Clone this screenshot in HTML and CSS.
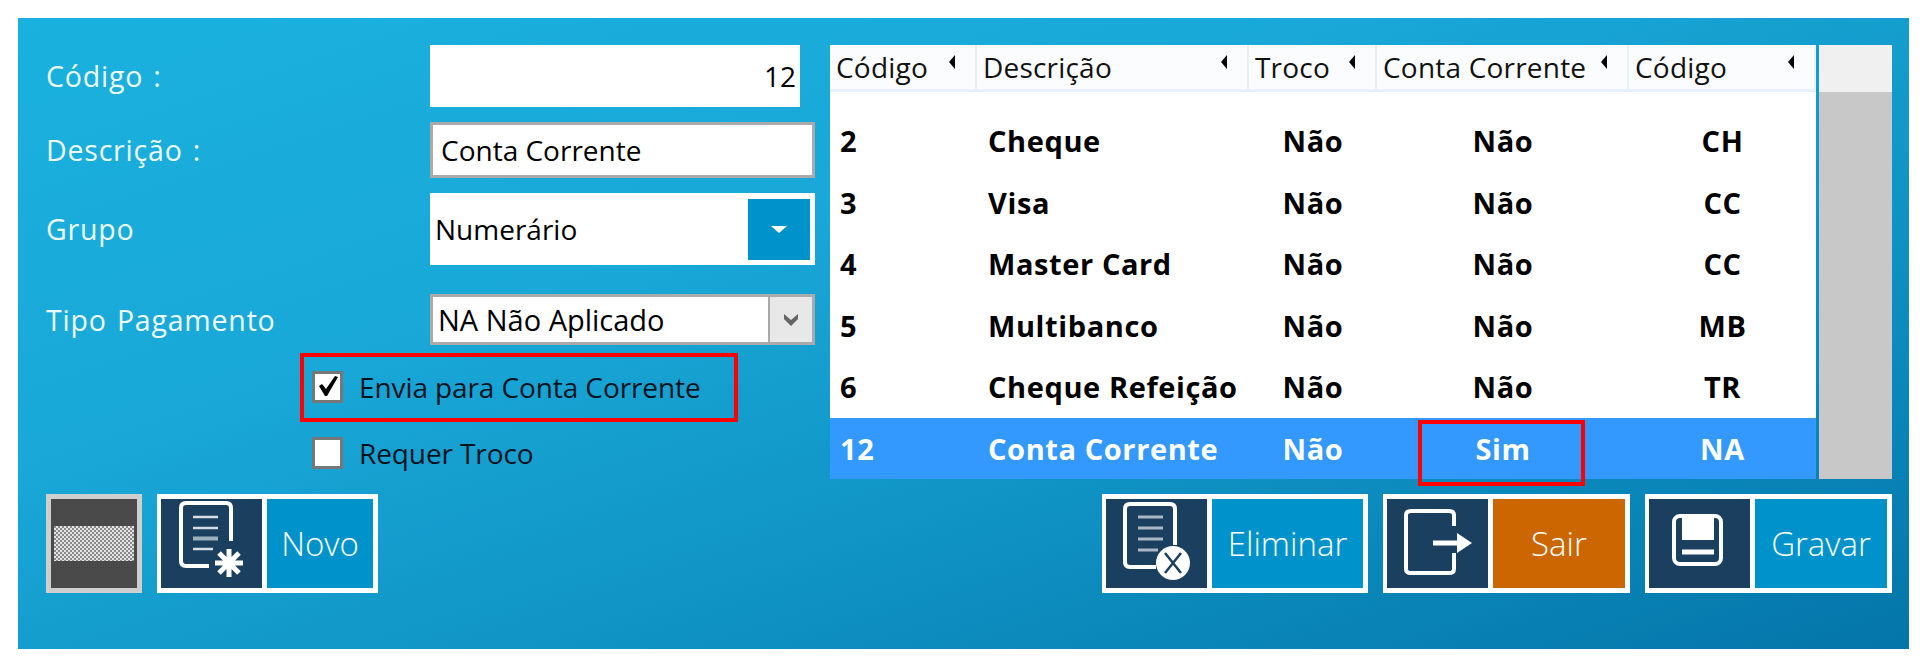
FILE: index.html
```html
<!DOCTYPE html>
<html>
<head>
  <title>Tipos de Pagamento</title>
  <link rel="stylesheet" href="styles.css">
</head>
<body>
  <div class="panel">
    <div class="top">
      <div class="form">
        <div class="form-row row-codigo">
          <div class="form-label">Código :</div>
          <div class="field field-code">12</div>
        </div>
        <div class="form-row row-desc">
          <div class="form-label">Descrição :</div>
          <div class="field field-text">Conta Corrente</div>
        </div>
        <div class="form-row row-grupo">
          <div class="form-label">Grupo</div>
          <div class="field field-grupo">
            <span>Numerário</span>
            <span class="grupo-btn"><span class="tri"></span></span>
          </div>
        </div>
        <div class="form-row row-tipo">
          <div class="form-label">Tipo Pagamento</div>
          <div class="field field-tipo">
            <span>NA Não Aplicado</span>
            <span class="tipo-btn">
              <svg width="16" height="14" viewBox="0 0 16 14"><path d="M1 1 L8 7 L15 1 L15 6 L8 13 L1 6 Z" fill="#666"/></svg>
            </span>
          </div>
        </div>
        <div class="check-row check-first">
          <span class="box">
            <svg width="25" height="26" viewBox="0 0 25 26"><path d="M4 12 L7 10 L11 15 L20 2 L23 3 L12 22 L10 22 Z" fill="#000"/></svg>
          </span>
          <span class="check-text">Envia para Conta Corrente</span>
          <div class="mark mark-check"></div>
        </div>
        <div class="check-row check-second">
          <span class="box"></span>
          <span class="check-text">Requer Troco</span>
        </div>
      </div>

      <div class="grid">
        <div class="grid-head">
          <div class="th"><span>Código</span><i class="sort"></i></div>
          <div class="th"><span>Descrição</span><i class="sort"></i></div>
          <div class="th"><span>Troco</span><i class="sort"></i></div>
          <div class="th"><span>Conta Corrente</span><i class="sort"></i></div>
          <div class="th"><span>Código</span><i class="sort"></i></div>
        </div>
        <div class="grid-body">
          <div class="tr"><div class="td">2</div><div class="td">Cheque</div><div class="td c">Não</div><div class="td c">Não</div><div class="td c">CH</div></div>
          <div class="tr"><div class="td">3</div><div class="td">Visa</div><div class="td c">Não</div><div class="td c">Não</div><div class="td c">CC</div></div>
          <div class="tr"><div class="td">4</div><div class="td">Master Card</div><div class="td c">Não</div><div class="td c">Não</div><div class="td c">CC</div></div>
          <div class="tr"><div class="td">5</div><div class="td">Multibanco</div><div class="td c">Não</div><div class="td c">Não</div><div class="td c">MB</div></div>
          <div class="tr"><div class="td">6</div><div class="td">Cheque Refeição</div><div class="td c">Não</div><div class="td c">Não</div><div class="td c">TR</div></div>
          <div class="tr selected"><div class="td">12</div><div class="td">Conta Corrente</div><div class="td c">Não</div><div class="td c sim">Sim<div class="mark mark-sim"></div></div><div class="td c">NA</div></div>
        </div>
      </div>

      <div class="scrollbar"><div class="scroll-top"></div></div>
    </div>

    <div class="bottom">
      <div class="btn-group">
        <div class="btn-off"><div class="hatch"></div></div>
        <div class="btn">
          <div class="btn-icon">
            <svg width="101" height="89" viewBox="0 0 101 89" fill="none" stroke="#fff">
              <path d="M48 67 H25 Q20 67 20 62 V9 Q20 4 25 4 H65 Q70 4 70 9 V42" stroke-width="4"/>
              <path d="M32 18 H57 M32 29 H57 M32 50 H52" stroke="#d5dee5" stroke-width="2.5"/>
              <path d="M32 39.5 H57" stroke="#9fb0bd" stroke-width="4"/>
              <path d="M68 50 V78 M54 64 H82 M58 54 L78 74 M78 54 L58 74" stroke-width="5"/>
            </svg>
          </div>
          <div class="btn-label label-novo">Novo</div>
        </div>
      </div>

      <div class="btn-group">
        <div class="btn">
          <div class="btn-icon">
            <svg width="101" height="89" viewBox="0 0 101 89" fill="none" stroke="#fff">
              <path d="M50 68 H24 Q19 68 19 63 V10 Q19 5 24 5 H64 Q69 5 69 10 V46" stroke-width="4"/>
              <path d="M32 18 H57 M32 29 H57 M32 40 H57 M32 51 H52" stroke="#a9b8c4" stroke-width="3"/>
              <circle cx="67" cy="64" r="17" fill="#fff" stroke="none"/>
              <path d="M59 54 L75 74 M75 54 L59 74" stroke="#1a3f5f" stroke-width="2.5"/>
            </svg>
          </div>
          <div class="btn-label label-del">Eliminar</div>
        </div>
        <div class="btn">
          <div class="btn-icon">
            <svg width="101" height="89" viewBox="0 0 101 89" fill="none" stroke="#fff">
              <path d="M67 27 V16 Q67 12 62 12 H24 Q19 12 19 16 V70 Q19 74 24 74 H62 Q67 74 67 70 V54" stroke-width="4"/>
              <path d="M46 44 H80" stroke-width="5"/>
              <path d="M70 34 L85 44 L70 54 Z" fill="#fff" stroke="none"/>
            </svg>
          </div>
          <div class="btn-label label-exit">Sair</div>
        </div>
        <div class="btn">
          <div class="btn-icon">
            <svg width="101" height="89" viewBox="0 0 101 89" fill="none" stroke="#fff">
              <rect x="25" y="17" width="47" height="48" rx="6" stroke-width="4"/>
              <rect x="33" y="18" width="32" height="23" fill="#fff" stroke="none"/>
              <path d="M33 53 H65" stroke-width="5"/>
            </svg>
          </div>
          <div class="btn-label label-save">Gravar</div>
        </div>
      </div>
    </div>
  </div>
</body>
</html>
```

FILE: styles.css
```css
html, body { margin: 0; padding: 0; background: #fff; overflow: hidden; }
body { font-family: "Open Sans", sans-serif; font-size: 28px; padding: 18px; width: 1891px; }

.panel { width: 1891px; height: 631px; box-sizing: border-box; padding: 27px 17px 0 28px;
         background: linear-gradient(to bottom right, #1ab1de, #19a8d8 35%, #0f93c4 65%, #0475a9); }
.top { display: flex; height: 434px; margin-bottom: 15px; }

/* form on the left */
.form { width: 784px; flex: none; }
.form-row { display: flex; align-items: center; }
.form-label { width: 384px; color: #eef9fd; font-size: 28.5px; letter-spacing: 0.8px; word-spacing: 2px; }
.row-desc, .row-grupo { margin-top: 15px; }
.row-tipo { margin-top: 29px; }

.field { background: #fff; color: #000; display: flex; align-items: center; box-sizing: border-box; }
.field-code { width: 370px; height: 62px; justify-content: flex-end; padding-right: 4px; }
.field-text { width: 385px; height: 56px; border: 3px solid #aaa; padding-left: 8px; }
.field-grupo { width: 385px; height: 72px; padding-left: 5px; justify-content: space-between; padding-right: 5px; }
.field-tipo { width: 385px; height: 51px; border: 3px solid #aaa; padding-left: 5px; justify-content: space-between; font-size: 29px; }

.grupo-btn { width: 62px; height: 61px; background: #0093cb; display: flex; align-items: center; justify-content: center; }
.tri { width: 0; height: 0; border-left: 8px solid transparent; border-right: 8px solid transparent; border-top: 7px solid #fff; }
.tipo-btn { width: 44px; height: 45px; background: #e8e8e8; border-left: 2px solid #aaa; display: flex; align-items: center; justify-content: center; box-sizing: border-box; }

.check-row { position: relative; display: flex; align-items: center; height: 32px; margin-left: 266px; color: #04121c; }
.check-first { margin-top: 26px; }
.check-second { margin-top: 34px; }
.box { width: 31px; height: 32px; box-sizing: border-box; border: 3px solid #777; background: #fff; display: flex; align-items: center; justify-content: center; }
.check-text { margin-left: 16px; letter-spacing: -0.1px; }

.mark { position: absolute; box-sizing: border-box; border: 4px solid #f00; }
.mark-check { left: -12px; top: -18px; width: 438px; height: 69px; }
.mark-sim { left: 41px; top: 2px; width: 167px; height: 66px; }

/* list on the right */
.grid { width: 986px; flex: none; background: #fff; }
.grid-head, .tr { display: grid; grid-template-columns: 147px 272px 128px 252px 187px; }
.grid-head { height: 47px; box-sizing: border-box; background: #fbfcfe; border-bottom: 3px solid #e8f1fb; letter-spacing: 0.2px; }
.th { display: flex; align-items: center; justify-content: space-between; box-sizing: border-box;
      padding: 0 20px 0 6px; border-right: 2px solid #e6effa; color: #111; }
.sort { width: 0; height: 0; margin-bottom: 10px; border-top: 7px solid transparent; border-bottom: 7px solid transparent; border-right: 6px solid #000; }
.grid-body { padding-top: 18px; }
.tr { height: 61.5px; font-weight: 700; color: #000; font-size: 29px; letter-spacing: 0.6px; }
.td { display: flex; align-items: center; padding-left: 10px; position: relative; }
.td:nth-child(2) { padding-left: 11px; }
.c { justify-content: center; padding-left: 0; }
.selected { background: #3399ff; color: #fff; }

.scrollbar { width: 73px; margin-left: 3px; background: #c8c8c8; }
.scroll-top { height: 47px; background: #f0f0f0; }

/* buttons */
.bottom { display: flex; justify-content: space-between; }
.btn-group { display: flex; gap: 15px; }
.btn { display: flex; gap: 5px; height: 99px; box-sizing: border-box; padding: 5px 5px 5px 4px; background: #fff; }
.btn-icon { width: 101px; height: 89px; background: #1a3f5f; }
.btn-icon svg { display: block; }
.btn-label { display: flex; align-items: center; justify-content: center; background: #0093cb; color: #fff; font-size: 33px; font-weight: 300; }
.label-novo { width: 106px; }
.label-del { width: 151px; }
.label-exit { width: 132px; background: #cc6600; }
.label-save { width: 132px; }

.btn-off { width: 96px; height: 99px; box-sizing: border-box; border: 5px solid #cfcfcf; background: #4a4a4a; padding: 27px 3px 0; }
.hatch { height: 35px; background: repeating-conic-gradient(#e4e4e4 0 25%, #8a8a8a 0 50%) 0 0 / 4px 4px; }
```
